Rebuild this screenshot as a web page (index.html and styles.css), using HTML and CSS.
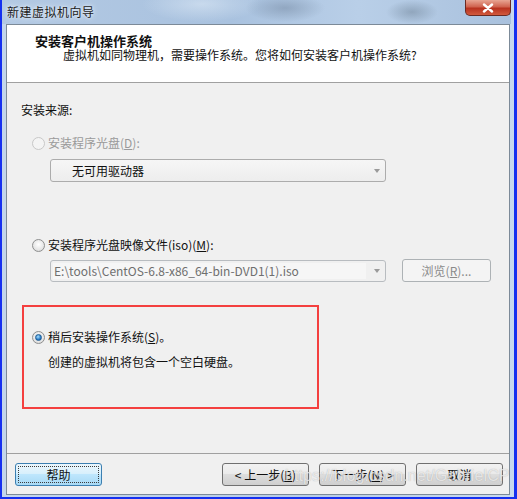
FILE: index.html
```html
<!DOCTYPE html>
<html lang="zh-CN">
<head>
  <meta charset="UTF-8">
  <title>新建虚拟机向导</title>
  <link rel="stylesheet" href="styles.css">
</head>
<body>
  <div class="window">
    <div class="titlebar">
      <span class="title">新建虚拟机向导</span>
      <div class="close">
        <svg width="14" height="10" viewBox="0 0 14 10">
          <path d="M3 1.5 L11 8.5 M11 1.5 L3 8.5" stroke="#fff" stroke-width="2.4" stroke-linecap="round"/>
        </svg>
      </div>
    </div>

    <div class="client">
      <div class="header">
        <div class="head-title">安装客户机操作系统</div>
        <div class="head-sub">虚拟机如同物理机，需要操作系统。您将如何安装客户机操作系统?</div>
      </div>

      <div class="content">
        <div class="label">安装来源:</div>

        <div class="option disabled"><span class="radio"></span>安装程序光盘(<u>D</u>):</div>
        <div class="combo">
          <span class="combo-text">无可用驱动器</span>
          <span class="arrow"></span>
        </div>

        <div class="option option-iso"><span class="radio"></span>安装程序光盘映像文件(iso)(<u>M</u>):</div>
        <div class="iso-row">
          <div class="combo combo-iso">
            <span class="combo-text">E:\tools\CentOS-6.8-x86_64-bin-DVD1(1).iso</span>
            <span class="arrow"></span>
          </div>
          <button class="btn btn-browse" disabled>浏览(<u>R</u>)...</button>
        </div>

        <div class="highlight">
          <div class="option"><span class="radio checked"></span>稍后安装操作系统(<u>S</u>)。</div>
          <div class="desc">创建的虚拟机将包含一个空白硬盘。</div>
        </div>
      </div>

      <div class="footer">
        <button class="btn btn-focus"><span class="focus-ring">帮助</span></button>
        <div class="spacer"></div>
        <button class="btn">&lt; 上一步(<u>B</u>)</button>
        <button class="btn">下一步(<u>N</u>) &gt;</button>
        <button class="btn">取消</button>
      </div>
    </div>

    <div class="watermark">https://blog.csdn.net/GabrielCP</div>
  </div>
</body>
</html>
```

FILE: styles.css
```css
body {
  margin: 0;
  font-family: "Noto Sans CJK SC", "Microsoft YaHei", sans-serif;
  font-size: 12px;
  line-height: 16px;
  color: #111;
}
.window {
  position: relative;
  width: 517px;
  height: 499px;
  box-sizing: border-box;
  border-left: 2px solid #1530f0;
  border-right: 3px solid #1530f0;
  border-bottom: 2px solid #1530f0;
  padding: 0 4px 2px 4px;
  background: linear-gradient(90deg, #c3d6ec, #b7cde6 60%, #c8daee);
  display: flex;
  flex-direction: column;
}
.titlebar {
  height: 24px;
  display: flex;
  justify-content: space-between;
  align-items: flex-start;
  margin: 0 -1px 0 -4px;
  padding-left: 5px;
  background:
    radial-gradient(ellipse 40px 14px at 283px 8px, rgba(120, 140, 165, 0.55), transparent),
    radial-gradient(ellipse 26px 12px at 410px 12px, rgba(110, 130, 150, 0.5), transparent),
    radial-gradient(ellipse 60px 18px at 200px 4px, rgba(230, 240, 250, 0.5), transparent),
    linear-gradient(90deg, #b3c9e3, #a9c2df 45%, #b9cfe8 70%, #a9c1dd);
}
.title {
  margin-top: 4px;
  color: #1a1a1a;
  letter-spacing: 0.5px;
  text-shadow: 0 0 6px #e8f0fa, 0 0 3px #e8f0fa;
}
.close {
  width: 44px;
  height: 15px;
  border: 1px solid #6b2a22;
  border-top: 0;
  border-radius: 0 0 5px 5px;
  background: linear-gradient(#e8a593, #d0634f 45%, #b8321f 55%, #d25a3d);
  display: flex;
  justify-content: center;
  align-items: center;
}
.client {
  flex: 1;
  border: 1px solid #7c8a98;
  background: #f0f0f0;
  display: flex;
  flex-direction: column;
}
.header {
  height: 48px;
  background: #fff;
  border-bottom: 1px solid #a0a0a0;
  padding: 9px 0 0 28px;
}
.head-title {
  font-size: 13px;
  font-weight: bold;
  line-height: 14px;
}
.head-sub {
  line-height: 14px;
  padding-left: 28px;
}
.content {
  flex: 1;
  padding: 19px 0 0 14px;
}
.option {
  display: flex;
  align-items: center;
  margin: 17px 0 0 11px;
  height: 16px;
}
.option-iso {
  margin-top: 55px;
}
.disabled {
  color: #9a9a9a;
}
.radio {
  width: 11px;
  height: 11px;
  border: 1px solid #8e8f8f;
  border-radius: 50%;
  margin-right: 3px;
  background: radial-gradient(circle at 50% 40%, #fff, #e6e6e6 60%, #cfcfcf);
  display: flex;
  justify-content: center;
  align-items: center;
}
.disabled .radio {
  border-color: #c8c8c8;
  background: #f4f4f4;
}
.radio.checked::after {
  content: "";
  width: 5px;
  height: 5px;
  border-radius: 50%;
  background: radial-gradient(circle at 40% 35%, #a6e0ff, #2a7cc8 60%, #144d8a);
  border: 1px solid #1f5d94;
}
.combo {
  width: 336px;
  height: 23px;
  box-sizing: border-box;
  margin: 8px 0 0 29px;
  border: 1px solid #acacac;
  border-radius: 3px;
  background: linear-gradient(#f6f6f6, #ededed);
  display: flex;
  align-items: center;
  justify-content: space-between;
  padding: 0 5px 0 21px;
}
.arrow {
  width: 0;
  height: 0;
  border-left: 3.5px solid transparent;
  border-right: 3.5px solid transparent;
  border-top: 4px solid #9a9a9a;
}
.iso-row {
  display: flex;
  align-items: flex-start;
  gap: 16px;
  margin: 6px 0 0 29px;
}
.combo-iso {
  margin: 1px 0 0 0;
  height: 22px;
  padding: 2px 5px 2px 2px;
  border-color: #b8bcc0;
  background: #f0f0f0;
}
.combo-iso .combo-text {
  flex: 0 0 312px;
  height: 16px;
  padding-left: 1px;
  background: #f6f6f6;
  color: #6f6f6f;
}
.btn {
  width: 87px;
  height: 23px;
  padding: 0;
  font: inherit;
  color: #111;
  border: 1px solid #707070;
  border-radius: 3px;
  background: linear-gradient(#f2f2f2 0, #ebebeb 45%, #dddddd 50%, #cfcfcf 100%);
}
.btn u,
.option u {
  text-underline-offset: 1px;
}
.btn-browse {
  width: 89px;
  border-color: #adb2b5;
  background: #f4f4f4;
  color: #8a8a8a;
}
.highlight {
  width: 297px;
  height: 104px;
  box-sizing: border-box;
  margin: 23px 0 0 1px;
  border: 2px solid #f4403f;
  padding: 22px 0 0 8px;
}
.highlight .option {
  margin: 0;
}
.desc {
  margin: 9px 0 0 16px;
}
.footer {
  height: 41px;
  box-sizing: border-box;
  border-top: 1px solid #a0a0a0;
  display: flex;
  align-items: flex-start;
  gap: 10px;
  padding: 9px 6px 0 8px;
}
.spacer {
  flex: 1;
}
.btn-focus {
  border-color: #3c7fb1;
  background: linear-gradient(#eaf6fd 0, #d9f0fc 45%, #bee6fd 50%, #a7d9f5 100%);
  padding: 2px;
}
.focus-ring {
  display: flex;
  height: 100%;
  box-sizing: border-box;
  align-items: center;
  justify-content: center;
  border: 1px dotted #3a3a3a;
  border-radius: 1px;
}
.watermark {
  position: absolute;
  left: 283px;
  top: 468px;
  font-family: "Liberation Sans", Arial, sans-serif;
  font-size: 16px;
  color: rgba(255, 255, 255, 0.7);
  text-shadow: 0 0 1px rgba(90, 90, 90, 0.45);
  letter-spacing: 0.1px;
}
```
